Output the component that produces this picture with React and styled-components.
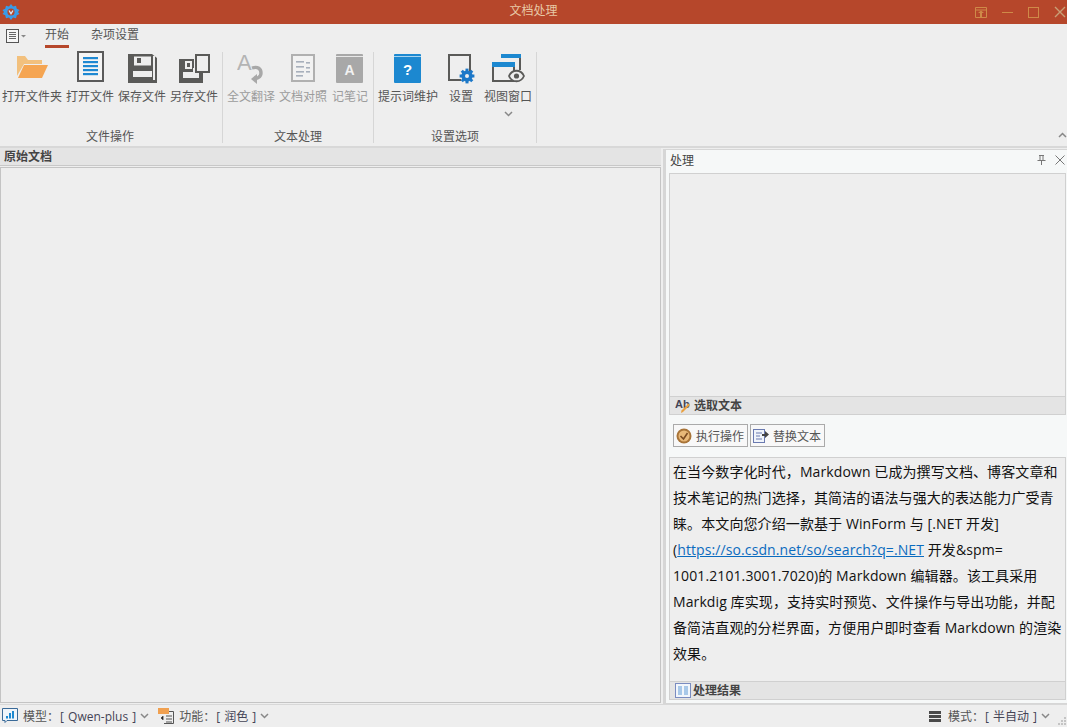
import React from "react";
import styled, { createGlobalStyle } from "styled-components";

const Global = createGlobalStyle`
  html, body { margin: 0; padding: 0; background: #eeeeee; overflow: hidden; }
  #root { width: 1067px; height: 727px; }
`;
const Win = styled.div`
  width: 1067px; height: 727px; display: flex; flex-direction: column; background: #eeeeee;
  font-family: "Open Sans", "Noto Sans CJK SC", sans-serif; font-size: 12px; color: #444;
`;
const TitleBar = styled.div`
  height: 24px; flex: none; background: #b6472b; display: flex; align-items: center; position: relative;
  padding-left: 2px; justify-content: space-between;
`;
const Title = styled.div`
  position: absolute; left: 0; right: 0; text-align: center; color: #e8c9a6; font-size: 12px; line-height: 22px; top: 0;
`;
const WinBtns = styled.div`display: flex; align-items: center; gap: 15px; padding-right: 1px;`;
const Tabs = styled.div`height: 24px; flex: none; display: flex; align-items: flex-start; padding-left: 6px;`;
const MenuBtn = styled.div`width: 27px; height: 24px; display: flex; align-items: center;`;
const Tab = styled.div`
  height: 24px; line-height: 22px; white-space: nowrap; display: flex; justify-content: center;
  position: relative; color: #555; flex: none; width: ${p => p.$w}px; margin: 0 ${p => p.$m}px;
  ${p => p.$on && `&::after { content: ""; position: absolute; left: 0; right: 0; bottom: 0; height: 3px; background: #b6472b; }`}
`;
const Ribbon = styled.div`
  height: 98px; flex: none; display: flex; position: relative; border-bottom: 2px solid #d8d8d8; box-sizing: content-box;
`;
const Group = styled.div`
  display: flex; flex-direction: column; width: ${p => p.$w}px; flex: none; margin-top: 4px; height: 91px;
  border-right: 1px solid #d6d6d6; box-sizing: border-box;
`;
const Btns = styled.div`display: flex; flex: none; height: 79px; padding-left: ${p => p.$pad || 0}px;`;
const Btn = styled.div`
  width: ${p => p.$w}px; flex: none; display: flex; flex-direction: column; align-items: center; position: relative;
  color: ${p => p.$off ? "#9c9c9c" : "#555"};
`;
const IconSlot = styled.div`height: 32px; margin-top: -1px; display: flex; justify-content: center; align-items: flex-start; width: 100%;`;
const BtnLabel = styled.div`margin-top: 6px; line-height: 16px; white-space: nowrap;`;
const Chev = styled.div`line-height: 0; margin-top: 6px;`;
const GroupName = styled.div`text-align: center; line-height: 12px; color: #555; flex: none; padding-right: ${p => p.$nudge || 0}px;`;
const Collapse = styled.div`position: absolute; right: 0; bottom: 8px; line-height: 0;`;

const Main = styled.div`flex: 1; display: flex; min-height: 0;`;
const Left = styled.div`width: 661px; flex: none; display: flex; flex-direction: column;`;
const PaneHead = styled.div`
  height: 18px; flex: none; background: #e4e4e4; font-weight: 600; line-height: 15px; font-size: 12px; color: #444;
  padding-left: 4px; display: flex; align-items: center; gap: 3px; border-bottom: 1px solid #c8c8c8; box-sizing: border-box;
`;
const Empty = styled.div`flex: 1; border: 1px solid #c4c4c4; margin-top: 1px; background: #eeeeee; margin-bottom: 1px;`;
const Right = styled.div`
  width: 404px; margin-left: 2px; flex: none; display: flex; flex-direction: column; margin-top: 1px;
  border: 1px solid #d6d6d6; border-left-width: 3px; border-right: none; box-sizing: border-box; padding-bottom: 4px; background: #f6f8f8;
`;
const RHead = styled.div`
  height: 23px; flex: none; display: flex; align-items: center; justify-content: space-between; padding: 0 2px 3px 4px; box-sizing: border-box; color: #444; background: #f6f8f8;
`;
const RTools = styled.div`display: flex; align-items: center; gap: 9px; line-height: 0;`;
const RBody = styled.div`flex: 1; display: flex; flex-direction: column; margin-left: 3px; margin-right: 1px; min-height: 0;`;
const Box = styled.div`
  height: ${p => p.$h}px; flex: none; background: #eeeeee; border: 1px solid #d0d0d0; border-bottom: none; box-sizing: border-box;
`;
const SecHead = styled(PaneHead)`
  height: 19px; border: 1px solid #d0d0d0; padding-left: 5px; gap: 2px; font-size: 12px;
`;
const Toolbar = styled.div`
  height: 42px; flex: none; display: flex; align-items: center; gap: 2px; padding: 0 0 1px 4px; background: #f6f8f8; box-sizing: border-box;
`;
const ToolBtn = styled.div`
  height: 23px; width: 75px; box-sizing: border-box; border: 1px solid #aaa; background: #f8f8f8; display: flex; align-items: center; gap: 4px; padding-left: 2px; color: #555; white-space: nowrap;
`;
const Doc = styled.div`
  height: 224px; flex: none; box-sizing: border-box; background: #eeeeee; border: 1px solid #d0d0d0; border-bottom: none; padding: 1px 0 0 3px;
  font-size: 14px; line-height: 26px; color: #111; letter-spacing: .1px;
`;
const Line = styled.div`white-space: nowrap; height: 26px;`;
const DocLink = styled.a`color: #0b6bbf; text-decoration: underline;`;
const Status = styled.div`
  height: 23px; flex: none; display: flex; align-items: center; border-top: 1px solid #d8d8d8; box-sizing: border-box; padding: 0 17px 0 2px; color: #555; position: relative;
`;
const StatusItem = styled.div`
  display: flex; align-items: center; white-space: nowrap;
  ${p => p.$end && "margin-left: auto;"}
  margin-right: ${p => p.$mr || 0}px;
`;
const StatusIcon = styled.div`line-height: 0; margin-right: ${p => p.$gap}px;`;
const Val = styled.span`color: #445; margin: 0 4px 0 1px; word-spacing: 1px;`;
const Grip = styled.div`position: absolute; right: 1px; bottom: 2px; line-height: 0;`;

const Chevron = ({ c = "#888" }) => (
  <svg width="9" height="6" viewBox="0 0 9 6"><path d="M1 1l3.5 3.5L8 1" fill="none" stroke={c} strokeWidth="1.5" /></svg>
);

const Logo = () => (
  <svg width="18" height="18" viewBox="0 0 18 18">
    <path d="M9 1l2 2.5 3-.8.8 3L17.5 7 16 9l1.5 2-2.7 1.3-.8 3-3-.8L9 17l-2-2.5-3 .8-.8-3L.5 11 2 9 .5 7l2.7-1.3.8-3 3 .8z" fill="#3a9be8" />
    <circle cx="9" cy="9" r="3.6" fill="#b6472b" />
    <path d="M7 7.5l2 3.2 2-3.2" fill="none" stroke="#d6e9f8" strokeWidth="1.3" />
  </svg>
);
const Folder = () => (
  <svg width="32" height="24" viewBox="0 0 32 24" style={{ marginTop: 5, marginLeft: 2 }}>
    <path d="M0 0h8l3 4h14v4H7L0 20z" fill="#f2c07d" />
    <path d="M1 22L7 9h24l-6 13z" fill="#f5a552" />
  </svg>
);
const OpenFile = () => (
  <svg width="27" height="31" viewBox="0 0 27 31">
    <rect x="1" y="1" width="25" height="29" fill="#f4f4f4" stroke="#5a5a5a" strokeWidth="2" />
    {[6, 10, 14, 18, 22].map(y => <rect key={y} x="6" y={y} width="15" height="2.2" fill="#1e88d2" />)}
  </svg>
);
const Save = () => (
  <svg width="29" height="29" viewBox="0 0 29 29" style={{ marginTop: 3 }}>
    <path d="M0 0h24l5 4v25H0z" fill="#5a5a58" />
    <rect x="6" y="2.5" width="17" height="9" fill="#eeeeee" />
    <rect x="9" y="4" width="4" height="5" fill="#5a5a58" />
    <rect x="5" y="17" width="19" height="6" fill="#eeeeee" />
    <rect x="25" y="2" width="2" height="24" fill="#eeeeee" />
  </svg>
);
const SaveAs = () => (
  <svg width="31" height="29" viewBox="0 0 31 29" style={{ marginTop: 3 }}>
    <path d="M0 5h15v9h-1v4h10v11H0z" fill="#5a5a58" />
    <rect x="6" y="7" width="7" height="8" fill="#eeeeee" />
    <rect x="8" y="9" width="3" height="4" fill="#5a5a58" />
    <rect x="4" y="18" width="16" height="6" fill="#eeeeee" />
    <rect x="17" y="1" width="13" height="17" fill="#eeeeee" stroke="#5a5a58" strokeWidth="2" />
  </svg>
);
const Translate = () => (
  <svg width="28" height="35" viewBox="0 0 28 35">
    <text x="0" y="19" fontSize="22" fontFamily="Liberation Sans, sans-serif" fill="#b4b4b4">A</text>
    <path d="M15 17c6-2 9 1 9 5 0 4-4 6-7 5" fill="none" stroke="#a8a8a8" strokeWidth="3.4" />
    <path d="M20 23v10l-6-5z" fill="#a8a8a8" />
  </svg>
);
const Compare = () => (
  <svg width="24" height="28" viewBox="0 0 24 28" style={{ marginTop: 3 }}>
    <rect x="1" y="1" width="22" height="26" fill="#f2f2f2" stroke="#b0b0b0" strokeWidth="2" />
    {[7, 12, 17, 21].map((y, i) => <rect key={y} x="5" y={y} width={i === 3 ? 7 : 8} height="1.6" fill="#a8b0bc" />)}
    {[8, 13, 17].map(y => <rect key={y} x="15" y={y} width="4" height="1.6" fill="#a8b0bc" />)}
  </svg>
);
const Note = () => (
  <svg width="27" height="29" viewBox="0 0 27 29" style={{ marginTop: 3, marginLeft: -2 }}>
    <rect width="27" height="29" rx="1" fill="#a8a8a8" />
    <rect y="2" width="27" height="1" fill="#e8e8e8" />
    <text x="13.5" y="21" textAnchor="middle" fontSize="14" fontWeight="700" fontFamily="Liberation Sans, sans-serif" fill="#f2f2f2">A</text>
  </svg>
);
const Help = () => (
  <svg width="27" height="29" viewBox="0 0 27 29" style={{ marginTop: 3, marginLeft: -2 }}>
    <rect width="27" height="29" rx="1" fill="#1c88d0" />
    <rect y="2" width="27" height="1" fill="#a8d4f0" />
    <text x="13.5" y="21" textAnchor="middle" fontSize="15" fontWeight="700" fontFamily="Liberation Sans, sans-serif" fill="#fff">?</text>
  </svg>
);
const Gear = () => (
  <svg width="27" height="30" viewBox="0 0 27 30" style={{ marginTop: 3, marginLeft: 1 }}>
    <path d="M13 26H1V1h21v17" fill="none" stroke="#5a5a58" strokeWidth="2" />
    <g fill="#1c78c8">
      <circle cx="19" cy="22" r="5.6" />
      {[0, 45, 90, 135].map(a => <rect key={a} x="17.5" y="14.6" width="3" height="14.8" transform={`rotate(${a} 19 22)`} />)}
    </g>
    <circle cx="19" cy="22" r="2" fill="#eeeeee" />
  </svg>
);
const ViewWin = () => (
  <svg width="33" height="30" viewBox="0 0 33 30" style={{ marginTop: 3 }}>
    <path d="M9 10V0h20v4H9z" fill="#1c88d0" />
    <path d="M28 4v12" stroke="#5a5a58" strokeWidth="2" />
    <rect x="1" y="9" width="21" height="18" fill="#eeeeee" stroke="#5a5a58" strokeWidth="2" />
    <rect x="0" y="8" width="23" height="5" fill="#1c88d0" />
    <path d="M17 22c3-7 12-7 15 0-3 7-12 7-15 0z" fill="#eeeeee" stroke="#5a5a58" strokeWidth="1.8" />
    <circle cx="24.5" cy="22" r="2.6" fill="#5a5a58" />
  </svg>
);

const groups = [
  { name: "文件操作", w: 223, pad: 0, nudge: 2, items: [
    { l: "打开文件夹", w: 64, I: Folder }, { l: "打开文件", w: 52, I: OpenFile },
    { l: "保存文件", w: 52, I: Save }, { l: "另存文件", w: 52, I: SaveAs } ] },
  { name: "文本处理", w: 151, pad: 2, items: [
    { l: "全文翻译", w: 52, I: Translate, off: 1 }, { l: "文档对照", w: 52, I: Compare, off: 1 },
    { l: "记笔记", w: 42, I: Note, off: 1 } ] },
  { name: "设置选项", w: 163, pad: 2, items: [
    { l: "提示词维护", w: 64, I: Help }, { l: "设置", w: 42, I: Gear }, { l: "视图窗口", w: 52, I: ViewWin, chev: 1 } ] },
];

const lines = [
  "在当今数字化时代，Markdown 已成为撰写文档、博客文章和",
  "技术笔记的热门选择，其简洁的语法与强大的表达能力广受青",
  "睐。本文向您介绍一款基于 WinForm 与 [.NET 开发]",
];

export default function App() {
  return (
    <Win>
      <Global />
      <TitleBar>
        <Logo />
        <Title>文档处理</Title>
        <WinBtns>
          <svg width="12" height="11" viewBox="0 0 12 11"><path d="M.5.5h11v10H.5zM.5 3h11" fill="none" stroke="#cf8a48" /><path d="M6 3.5L9 6H7v4H5V6H3z" fill="#cf8a48" /></svg>
          <svg width="11" height="11" viewBox="0 0 11 11"><path d="M0 5.5h11" stroke="#cf8a48" /></svg>
          <svg width="11" height="11" viewBox="0 0 11 11"><rect x=".5" y=".5" width="10" height="10" fill="none" stroke="#cf8a48" /></svg>
          <svg width="12" height="12" viewBox="0 0 12 12"><path d="M1 1l10 10M11 1L1 11" stroke="#c8a078" strokeWidth="1.4" /></svg>
        </WinBtns>
      </TitleBar>
      <Tabs>
        <MenuBtn>
          <svg width="21" height="14" viewBox="0 0 21 14"><rect x=".5" y=".5" width="12" height="13" fill="#f6f6f6" stroke="#555" /><path d="M3 3.5h7M3 5.5h7M3 7.5h7M3 9.5h7" stroke="#666" /><path d="M15 6h5l-2.5 2.5z" fill="#888" /></svg>
        </MenuBtn>
        <Tab $on $w={24} $m={12}>开始</Tab>
        <Tab $w={48} $m={10}>杂项设置</Tab>
      </Tabs>
      <Ribbon>
        {groups.map(g => (
          <Group key={g.name} $w={g.w}>
            <Btns $pad={g.pad}>
              {g.items.map(it => (
                <Btn key={it.l} $w={it.w} $off={it.off}>
                  <IconSlot><it.I /></IconSlot>
                  <BtnLabel>{it.l}</BtnLabel>
                  {it.chev && <Chev><Chevron /></Chev>}
                </Btn>
              ))}
            </Btns>
            <GroupName $nudge={g.nudge}>{g.name}</GroupName>
          </Group>
        ))}
        <Collapse><svg width="9" height="6" viewBox="0 0 9 6"><path d="M1 5l3.5-3.5L8 5" fill="none" stroke="#888" strokeWidth="1.5" /></svg></Collapse>
      </Ribbon>
      <Main>
        <Left>
          <PaneHead>原始文档</PaneHead>
          <Empty />
        </Left>
        <Right>
          <RHead>
            <span>处理</span>
            <RTools>
              <svg width="9" height="10" viewBox="0 0 9 10"><path d="M2 .5h5M3 .5v5M6 .5v5M.5 5.5h8M4.5 5.5V10" fill="none" stroke="#777" /></svg>
              <svg width="10" height="10" viewBox="0 0 10 10"><path d="M.5.5l9 9M9.5.5l-9 9" stroke="#777" /></svg>
            </RTools>
          </RHead>
          <RBody>
            <Box $h={223} />
            <SecHead>
              <svg width="17" height="16" viewBox="0 0 17 16"><text x="0" y="10" fontSize="11" fontWeight="700" fontFamily="Liberation Sans, sans-serif" fill="#445">Ab</text><path d="M6 15l2-1 7-7-1.5-1.5-7 7z" fill="#e8a040" /></svg>
              选取文本
            </SecHead>
            <Toolbar>
              <ToolBtn>
                <svg width="16" height="16" viewBox="0 0 16 16"><circle cx="8" cy="8" r="7.5" fill="#a87438" /><circle cx="8" cy="8" r="5.5" fill="#e8b878" /><path d="M4.5 8l3 3 4-6" fill="none" stroke="#7a4a20" strokeWidth="1.6" /></svg>
                执行操作
              </ToolBtn>
              <ToolBtn>
                <svg width="16" height="14" viewBox="0 0 16 14"><rect x=".5" y=".5" width="11" height="13" fill="#f0f4fa" stroke="#6a7ab0" /><path d="M3 4h6M3 7h4M3 10h6" stroke="#6a7ab0" /><path d="M9 5h3V2l4 3.5L12 9V7H9z" fill="#444" /></svg>
                替换文本
              </ToolBtn>
            </Toolbar>
            <Doc>
              {lines.map(l => <Line key={l}>{l}</Line>)}
              <Line>(<DocLink>https://so.csdn.net/so/search?q=.NET</DocLink> 开发&amp;spm=</Line>
              <Line>1001.2101.3001.7020)的 Markdown 编辑器。该工具采用</Line>
              <Line>Markdig 库实现，支持实时预览、文件操作与导出功能，并配</Line>
              <Line>备简洁直观的分栏界面，方便用户即时查看 Markdown 的渲染</Line>
              <Line>效果。</Line>
            </Doc>
            <SecHead>
              <svg width="16" height="15" viewBox="0 0 16 15"><rect x=".5" y=".5" width="15" height="14" fill="#f2f6fb" stroke="#7a8cc0" /><rect x="3" y="3" width="4" height="9" fill="#a8c8e8" /><rect x="9" y="3" width="4" height="9" fill="#a8c8e8" /></svg>
              处理结果
            </SecHead>
          </RBody>
        </Right>
      </Main>
      <Status>
        <StatusItem $mr={9}>
          <StatusIcon $gap={4}>
            <svg width="17" height="16" viewBox="0 0 17 16"><path d="M.5.5h15v12H5l-2 2v-2H.5z" fill="#eef4fa" stroke="#3a6a98" /><path d="M4 10.5V8h2v2.5zM7 10.5V5h2v5.5zM10 10.5V3h2v7.5z" fill="#1c88d0" /></svg>
          </StatusIcon>
          模型：<Val>[ Qwen-plus ]</Val><Chevron />
        </StatusItem>
        <StatusItem>
          <StatusIcon $gap={5}>
            <svg width="16" height="16" viewBox="0 0 16 16"><path d="M11 3.5h4.5v12H6" fill="none" stroke="#555" /><rect width="11" height="6" fill="#f0a050" /><path d="M8 8h6M8 11h6M8 14h6M3 10l2-2v4z" stroke="#555" /></svg>
          </StatusIcon>
          功能：<Val>[ 润色 ]</Val><Chevron />
        </StatusItem>
        <StatusItem $end>
          <StatusIcon $gap={7}>
            <svg width="12" height="11" viewBox="0 0 12 11"><path d="M0 0h12v3H0zM0 4h12v3H0zM0 8h12v3H0z" fill="#4a4a4a" /></svg>
          </StatusIcon>
          模式：<Val>[ 半自动 ]</Val><Chevron />
        </StatusItem>
        <Grip><svg width="8" height="8" viewBox="0 0 8 8"><path d="M6 0h2v2H6zM3 3h2v2H3zM6 3h2v2H6zM0 6h2v2H0zM3 6h2v2H3zM6 6h2v2H6z" fill="#c4c4c4" /></svg></Grip>
      </Status>
    </Win>
  );
}
